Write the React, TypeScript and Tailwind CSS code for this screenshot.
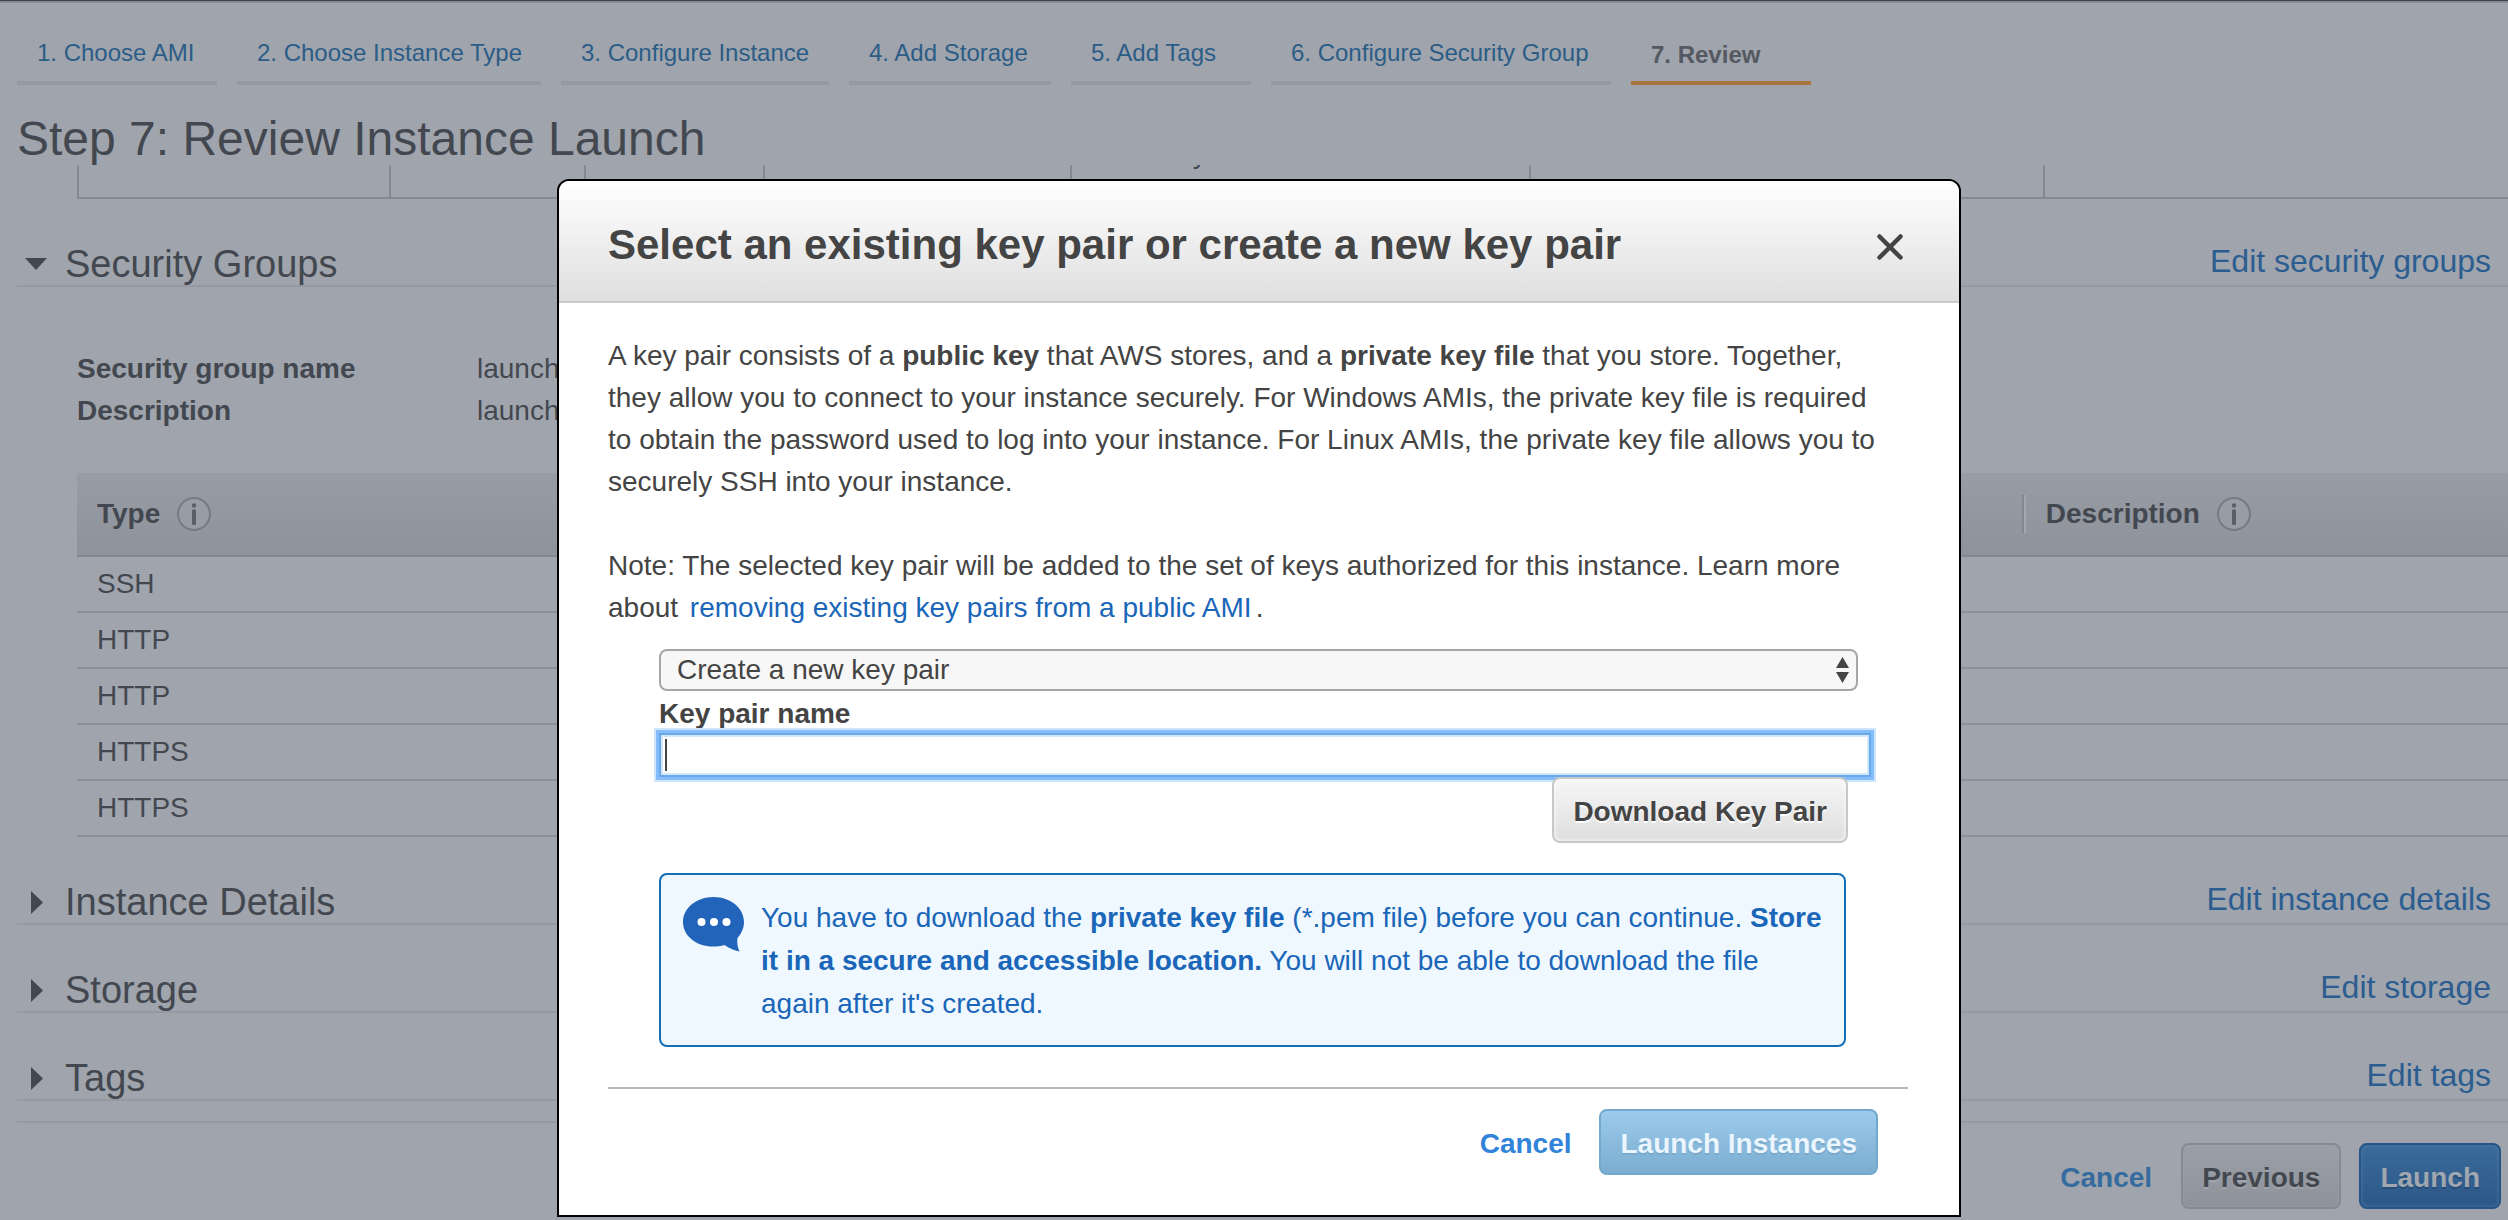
import type { ReactNode } from 'react'

const steps = [
  { label: '1. Choose AMI', width: 'min-w-[200px]' },
  { label: '2. Choose Instance Type', width: 'min-w-[304px]' },
  { label: '3. Configure Instance', width: 'min-w-[268px]' },
  { label: '4. Add Storage', width: 'min-w-[202px]' },
  { label: '5. Add Tags', width: 'min-w-[180px]' },
  { label: '6. Configure Security Group', width: 'min-w-[340px]' },
]

const rules = ['SSH', 'HTTP', 'HTTP', 'HTTPS', 'HTTPS']

function InfoIcon() {
  return (
    <svg viewBox="0 0 36 36" className="size-9" aria-hidden="true">
      <circle cx="18" cy="18" r="16" fill="#989ca5" stroke="#757a83" strokeWidth="2" />
      <circle cx="18" cy="9.5" r="2.2" fill="#5a5f68" />
      <rect x="16" y="13.500" width="4" height="15.500" rx="1" fill="#5a5f68" />
    </svg>
  )
}

function SectionHeader({ title, link, open = false }: { title: string; link: string; open?: boolean }) {
  return (
    <div className="flex h-[54px] items-end justify-between border-b-2 border-[#959aa2] pr-[17px]">
      <h2 className="flex items-center text-[38px] leading-[42px]">
        <button type="button" aria-expanded={open} className="flex items-center">
          <span className="flex w-12 pl-2">
            {open ? (
              <svg viewBox="0 0 22 12" className="h-3 w-[22px]" aria-hidden="true">
                <path d="M0 0h22L11 12z" fill="#434850" />
              </svg>
            ) : (
              <svg viewBox="0 0 12 23" className="ml-[6px] h-[23px] w-3" aria-hidden="true">
                <path d="M0 0l12 11.500L0 23z" fill="#434850" />
              </svg>
            )}
          </span>
          {title}
        </button>
      </h2>
      <a href="#" className="pb-[3px] text-[32px] leading-[42px] text-[#2b5d90]">
        {link}
      </a>
    </div>
  )
}

function HeaderCell({ children, divided = false }: { children?: ReactNode; divided?: boolean }) {
  return (
    <th className="h-[84px] border-b-2 border-[#848891] p-0 text-left font-bold">
      <div
        className={
          divided
            ? 'flex h-[38px] items-center gap-4 border-l-2 border-[#83878f] pl-[22px] shadow-[inset_2px_0_0_#a3a7af]'
            : 'flex h-[38px] items-center gap-4 pl-5'
        }
      >
        {children}
      </div>
    </th>
  )
}

function ReviewPage() {
  return (
    <div className="min-h-screen overflow-hidden border-t border-[#3b4252] bg-[#a0a4ac] text-[28px] leading-[42px] text-[#434850]">
      <div className="border-t-2 border-[#868b93]">
        <nav aria-label="Launch steps" className="flex gap-5 pl-[17px] pt-[26px] text-2xl">
          {steps.map((s) => (
            <a
              key={s.label}
              href="#"
              className={`${s.width} h-14 border-b-4 border-[#959aa2] pl-5 leading-[48px] text-[#2b5d87]`}
            >
              {s.label}
            </a>
          ))}
          <span
            aria-current="step"
            className="h-14 min-w-[180px] border-b-4 border-[#a8763c] pl-5 font-bold leading-[52px] text-[#545962]"
          >
            7. Review
          </span>
        </nav>
        <h1 className="pl-[17px] pt-7 text-5xl leading-[52px]">Step 7: Review Instance Launch</h1>
      </div>

      <div className="flex h-[34px] items-end overflow-hidden pl-[77px]">
        <table className="w-full shrink-0 table-fixed border-b-2 border-l-2 border-[#848891]">
          <colgroup>
            <col className="w-[12.85%]" />
            <col className="w-[8%]" />
            <col className="w-[7.4%]" />
            <col className="w-[12.6%]" />
            <col className="w-[18.9%]" />
            <col className="w-[21.15%]" />
            <col />
          </colgroup>
          <tbody>
            <tr>
              {['t2.micro', 'Variable', '1', '1', 'EBS only', '-', 'Low to Moderate'].map((t, i) => (
                <td key={i} className="border-r-2 border-[#848891] pb-[22px] pl-5 pt-3 last:border-r-0">
                  {t}
                </td>
              ))}
            </tr>
          </tbody>
        </table>
      </div>

      <div className="pl-[17px] pt-[34px]">
        <SectionHeader title="Security Groups" link="Edit security groups" open />
        <div className="pl-[60px] pt-[61px]">
          <dl className="grid grid-cols-[400px_1fr]">
            <dt className="font-bold">Security group name</dt>
            <dd>launch-wizard-1</dd>
            <dt className="font-bold">Description</dt>
            <dd>launch-wizard-1 created</dd>
          </dl>
          <table className="mt-[41px] w-full table-fixed border-separate border-spacing-0">
            <colgroup>
              <col className="w-[80%]" />
              <col />
            </colgroup>
            <thead>
              <tr className="bg-linear-to-b from-[#989ca5] to-[#8e929a]">
                <HeaderCell>
                  Type <InfoIcon />
                </HeaderCell>
                <HeaderCell divided>
                  Description <InfoIcon />
                </HeaderCell>
              </tr>
            </thead>
            <tbody>
              {rules.map((r, i) => (
                <tr key={i}>
                  <td className="h-14 border-b-2 border-[#8c9099] p-0 pl-5">{r}</td>
                  <td className="border-b-2 border-[#8c9099] p-0" />
                </tr>
              ))}
            </tbody>
          </table>
        </div>
        <div className="flex flex-col gap-[34px] border-b-2 border-[#959aa2] pb-5 pt-[34px]">
          <SectionHeader title="Instance Details" link="Edit instance details" />
          <SectionHeader title="Storage" link="Edit storage" />
          <SectionHeader title="Tags" link="Edit tags" />
        </div>
      </div>

      <footer className="flex items-center justify-end pr-[7px] pt-5 font-bold">
        <a href="#" className="mr-[29px] pt-1 text-[#356b9f]">
          Cancel
        </a>
        <button
          type="button"
          className="mr-[18px] h-[66px] rounded-lg border-2 border-[#868a92] bg-linear-to-b from-[#9b9fa7] to-[#8e929a] px-[19px] pt-1 shadow-[inset_0_0_3px_#a0a4ac] [text-shadow:0_2px_0_#a0a4ac]"
        >
          Previous
        </button>
        <button
          type="button"
          className="h-[66px] rounded-lg border-2 border-[#265585] bg-linear-to-b from-[#3a6b9a] to-[#2b5787] px-[19px] pt-1 text-[#a0a7b0] shadow-[inset_0_0_4px_#4c7aa5] [text-shadow:0_2px_0_#264c78]"
        >
          Launch
        </button>
      </footer>
    </div>
  )
}

function KeyPairDialog() {
  return (
    <div
      role="dialog"
      aria-modal="true"
      aria-labelledby="dialog-title"
      className="w-[1404px] overflow-hidden rounded-t-xl border-2 border-black bg-white text-[28px] leading-[42px] text-[#444]"
    >
      <header className="flex h-[122px] items-center justify-between border-b-2 border-[#c9c9c9] bg-linear-to-b from-white to-[#dfdfdf] pl-[49px] pr-[55px] pt-2">
        <h2 id="dialog-title" className="text-[42px] font-bold leading-[52px]">
          Select an existing key pair or create a new key pair
        </h2>
        <button type="button" aria-label="Close">
          <svg viewBox="0 0 28 28" className="mt-1 size-7" aria-hidden="true">
            <path d="M3.500 3.500l21 21M24.500 3.500l-21 21" stroke="#444" strokeWidth="4.500" strokeLinecap="round" />
          </svg>
        </button>
      </header>

      <div className="pb-10 pl-[49px] pr-[51px] pt-8">
        <div className="pr-4">
          <p>
            A key pair consists of a <b>public key</b> that AWS stores, and a <b>private key file</b> that you store.
            Together, they allow you to connect to your instance securely. For Windows AMIs, the private key file is
            required to obtain the password used to log into your instance. For Linux AMIs, the private key file allows
            you to securely SSH into your instance.
          </p>
          <p className="mt-[42px]">
            Note: The selected key pair will be added to the set of keys authorized for this instance. Learn more about{' '}
            <a href="#" className="mx-1 text-[#1a66b8]">
              removing existing key pairs from a public AMI
            </a>
            .
          </p>
        </div>

        <form className="mt-5 pl-[51px] pr-[37px]" onSubmit={(e) => e.preventDefault()}>
          <div className="relative mr-[13px]">
            <select
              aria-label="Key pair option"
              className="block h-[42px] w-full appearance-none rounded-lg border-2 border-[#a6a6a6] bg-[#f7f7f7] pl-4 leading-[38px]"
            >
              <option>Create a new key pair</option>
            </select>
            <svg
              viewBox="0 0 13 26"
              className="pointer-events-none absolute right-[9px] top-2 h-[26px] w-[13px]"
              aria-hidden="true"
            >
              <path d="M6.500 0L13 11H0zM6.500 26L0 15h13z" fill="#444" />
            </svg>
          </div>
          <label htmlFor="key-name" className="block h-[42px] pt-[2px] font-bold">
            Key pair name
          </label>
          <div className="relative">
            <input
              id="key-name"
              type="text"
              className="block h-11 w-full border-2 border-[#69a9ea] bg-white px-1 caret-transparent shadow-[inset_0_0_0_2px_#d0e7fd,0_0_0_3px_#85bdfb,0_0_0_5px_#cfe5fb] outline-none"
            />
            <span className="absolute left-[6px] top-[6px] h-8 w-[2px] bg-[#444]" />
          </div>
          <div className="relative flex justify-end pr-[23px]">
            <button
              type="button"
              className="h-[66px] rounded-lg border-2 border-[#c8c8c8] bg-linear-to-b from-[#f6f6f6] to-[#dedede] px-[19px] pt-1 font-bold shadow-[inset_0_0_4px_#fff] [text-shadow:0_2px_0_#fff]"
            >
              Download Key Pair
            </button>
          </div>
          <div className="mr-[25px] mt-[30px] flex rounded-lg border-2 border-[#146eb4] bg-[#f0f8ff] pb-5 pl-[22px] pr-5 pt-[21px] leading-[43px] text-[#1a66b8]">
            <svg viewBox="0 0 61 55" className="mr-[17px] mt-px h-[55px] w-[61px] shrink-0" aria-hidden="true">
              <path
                d="M30.500 0C13.500 0 0 11 0 25s13.500 24.500 30 24.500c4 0 8-.5 11.500-1.500C46 51 51 53.500 56.500 54.500 54.500 50 53.800 45.500 54.500 41c4-4.500 6.500-10 6.500-16C61 11 47.500 0 30.500 0z"
                fill="#2164b9"
              />
              <circle cx="18.500" cy="25" r="4" fill="#fff" />
              <circle cx="31" cy="25" r="4" fill="#fff" />
              <circle cx="43.500" cy="25" r="4" fill="#fff" />
            </svg>
            <p>
              You have to download the <b>private key file</b> (*.pem file) before you can continue.{' '}
              <b>Store it in a secure and accessible location.</b> You will not be able to download the file again after
              it's created.
            </p>
          </div>
        </form>

        <div className="mt-10 flex items-center justify-end border-t-2 border-[#b8b8b8] pr-[30px] pt-5 font-bold">
          <a href="#" className="mr-7 pt-1 text-[#3184d9]">
            Cancel
          </a>
          <button
            type="button"
            disabled
            className="h-[66px] rounded-lg border-2 border-[#72a9cc] bg-linear-to-b from-[#9ccbec] to-[#7aadd0] px-[19px] pt-1 text-[#eaf5fd] [text-shadow:0_2px_0_#7aa9cb]"
          >
            Launch Instances
          </button>
        </div>
      </div>
    </div>
  )
}

export default function App() {
  return (
    <main className="relative font-['Liberation_Sans',Arial,sans-serif]">
      <ReviewPage />
      <div className="absolute inset-x-0 top-0 flex justify-center pl-[10px] pt-[179px]">
        <KeyPairDialog />
      </div>
    </main>
  )
}
